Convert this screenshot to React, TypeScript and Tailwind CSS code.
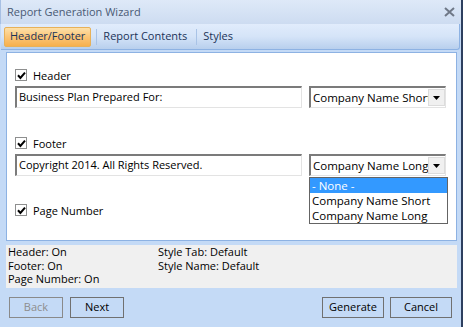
import React from 'react'

const font = { fontFamily: '"Open Sans", "Noto Sans", sans-serif' }

function Check() {
  return (
    <span className="w-[12px] h-[12px] border border-[#8e8f8f] bg-white flex items-center justify-center shrink-0">
      <svg width="9" height="9" viewBox="0 0 9 9">
        <path d="M1 4.3l2.4 2.6L8 1.6" fill="none" stroke="#000" strokeWidth="2" />
      </svg>
    </span>
  )
}

function CheckRow({ label }: { label: string }) {
  return (
    <div className="flex items-center h-[12px] gap-[6px]">
      <Check />
      <span className="text-[11px] text-black leading-none">{label}</span>
    </div>
  )
}

function TextBox({ value }: { value: string }) {
  return (
    <div className="w-[287px] h-[22px] border-t-2 border-l-2 border-t-[#7b7b7b] border-l-[#7b7b7b] border-b border-r border-b-[#e3e3e3] border-r-[#e3e3e3] bg-white flex items-center pl-[2px] text-[11px] text-black">
      {value}
    </div>
  )
}

function Combo({ value, open }: { value: string; open?: boolean }) {
  return (
    <div className="relative ml-[7px]">
      <div className="w-[137px] h-[22px] border-t-2 border-l-2 border-t-[#7b7b7b] border-l-[#7b7b7b] border-b border-r border-b-[#e3e3e3] border-r-[#e3e3e3] bg-white flex items-center pl-[2px] text-[11.5px] text-black overflow-hidden">
        <span className="whitespace-nowrap overflow-hidden flex-1">{value}</span>
        <span className="w-[17px] h-[17px] bg-[#f0f0f0] border border-[#dcdcdc] flex items-center justify-center shrink-0">
          <svg width="7" height="4" viewBox="0 0 7 4">
            <path d="M0 0h7L3.5 4z" fill="#000" />
          </svg>
        </span>
      </div>
      {open && (
        <div className="absolute left-0 top-[23px] w-[139px] border border-[#646464] bg-white flex flex-col text-[11.5px] text-black z-10">
          <div className="h-[15px] bg-[#3399ff] text-white flex items-center pl-[2px]">- None -</div>
          <div className="h-[15px] flex items-center pl-[2px]">Company Name Short</div>
          <div className="h-[15px] flex items-center pl-[2px]">Company Name Long</div>
        </div>
      )}
    </div>
  )
}

function Btn({ label, disabled, w }: { label: string; disabled?: boolean; w: string }) {
  return (
    <div
      className={`${w} h-[21px] border flex items-center justify-center text-[11px] ${
        disabled ? 'border-[#8a8a8a] text-[#8d8d8d]' : 'border-[#707070] text-black'
      }`}
    >
      {label}
    </div>
  )
}

export default function App() {
  return (
    <div style={font} className="w-[463px] h-[327px] bg-[#c4daf6] border-r-2 border-[#2d3f5f] flex flex-col overflow-hidden">
      {/* title */}
      <div className="h-[24px] bg-gradient-to-b from-[#dee9f8] to-[#cddcf1] flex items-center justify-between pl-[6px] pr-[6px] border-l border-[#a7c0e4]">
        <span className="text-[11px] text-[#4a5a74]">Report Generation Wizard</span>
        <svg width="11" height="10" viewBox="0 0 11 10">
          <path d="M1 1l9 8M10 1l-9 8" stroke="#6f7887" strokeWidth="2" />
        </svg>
      </div>

      {/* tabs */}
      <div className="h-[26px] ml-[1px] w-[459px] bg-gradient-to-b from-[#e1ecfc] via-[#d5e4f8] to-[#b8cfed] border-b border-r border-[#8db2e3] rounded-br-[3px] flex items-center pl-[3px] text-[11px] text-[#1b3358]">
        <div className="h-[20px] px-[5px] flex items-center rounded-[2px] border border-[#e7b15a] bg-gradient-to-b from-[#fde0a8] via-[#fbc576] to-[#f7b04d]">
          Header/Footer
        </div>
        <div className="w-px h-[16px] bg-[#a9c3e6] ml-[5px]" />
        <div className="px-[6px]">Report Contents</div>
        <div className="w-px h-[16px] bg-[#a9c3e6] ml-[3px]" />
        <div className="px-[6px]">Styles</div>
      </div>

      {/* panel */}
      <div className="mt-[2px] ml-[6px] w-[451px] h-[189px] bg-white border border-[#8db2e3] pl-[8px] pt-[16px] flex flex-col">
        <CheckRow label="Header" />
        <div className="flex mt-[5px]">
          <TextBox value="Business Plan Prepared For:" />
          <Combo value="Company Name Short" />
        </div>
        <div className="mt-[29px]">
          <CheckRow label="Footer" />
        </div>
        <div className="flex mt-[5px]">
          <TextBox value="Copyright 2014. All Rights Reserved." />
          <Combo value="Company Name Long" open />
        </div>
        <div className="mt-[28px]">
          <CheckRow label="Page Number" />
        </div>
      </div>

      {/* status */}
      <div className="mt-[4px] ml-[6px] w-[451px] h-[43px] bg-[#f0f0f0] pl-[2px] grid grid-cols-[150px_1fr] text-[11px] leading-[13.5px] text-black">
        <div className="flex flex-col">
          <span>Header: On</span>
          <span>Footer: On</span>
          <span>Page Number: On</span>
        </div>
        <div className="flex flex-col">
          <span>Style Tab: Default</span>
          <span>Style Name: Default</span>
        </div>
      </div>

      {/* buttons */}
      <div className="mt-[9px] flex px-[9px]">
        <div className="flex gap-[7px]">
          <Btn label="Back" disabled w="w-[54px]" />
          <Btn label="Next" w="w-[54px]" />
        </div>
        <div className="flex gap-[6px] ml-auto">
          <Btn label="Generate" w="w-[62px]" />
          <Btn label="Cancel" w="w-[62px]" />
        </div>
      </div>
    </div>
  )
}
